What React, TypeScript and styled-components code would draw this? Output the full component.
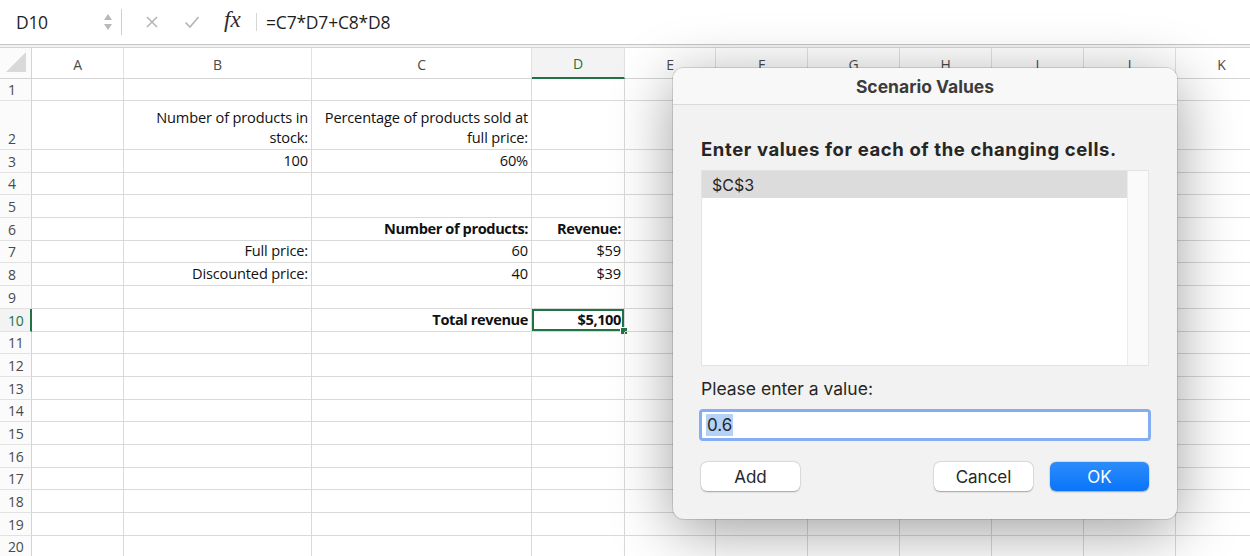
import styled, { createGlobalStyle } from 'styled-components'

const GlobalStyle = createGlobalStyle`
  html, body {
    margin: 0;
    padding: 0;
    background: #ffffff;
  }
  body {
    width: 1250px;
    height: 556px;
    overflow: hidden;
    font-family: "Open Sans", "Liberation Sans", sans-serif;
  }
`

const GREEN = '#217346'

const COLUMNS = [
  { label: 'A', width: 92 },
  { label: 'B', width: 188 },
  { label: 'C', width: 220 },
  { label: 'D', width: 93 },
  { label: 'E', width: 91 },
  { label: 'F', width: 92 },
  { label: 'G', width: 92 },
  { label: 'H', width: 92 },
  { label: 'I', width: 92 },
  { label: 'J', width: 92 },
  { label: 'K', width: 92 },
]

const ROW_HEIGHTS = [22, 49, ...Array(18).fill(22.7)]

type CellData = { text: string; bold?: boolean }

const CELLS: Record<string, CellData> = {
  B2: { text: 'Number of products in\nstock:' },
  C2: { text: 'Percentage of products sold at\nfull price:' },
  B3: { text: '100' },
  C3: { text: '60%' },
  C6: { text: 'Number of products:', bold: true },
  D6: { text: 'Revenue:', bold: true },
  B7: { text: 'Full price:' },
  C7: { text: '60' },
  D7: { text: '$59' },
  B8: { text: 'Discounted price:' },
  C8: { text: '40' },
  D8: { text: '$39' },
  C10: { text: 'Total revenue', bold: true },
  D10: { text: '$5,100', bold: true },
}

const ACTIVE = { col: 'D', row: 10 }

export default function App() {
  return (
    <>
      <GlobalStyle />
      <Page>
        <FormulaBar>
          <NameBox>D10</NameBox>
          <Spinner>
            <svg width="10" height="20" viewBox="0 0 10 20">
              <path d="M1 8 L5 2 L9 8 Z" fill="#b9b9b9" />
              <path d="M1 12 L5 18 L9 12 Z" fill="#b9b9b9" />
            </svg>
          </Spinner>
          <BarDivider />
          <BarIcon>
            <svg width="14" height="14" viewBox="0 0 14 14">
              <path d="M2 2 L12 12 M12 2 L2 12" stroke="#b5b5b5" strokeWidth="1.6" fill="none" />
            </svg>
          </BarIcon>
          <BarIcon>
            <svg width="16" height="14" viewBox="0 0 16 14">
              <path d="M1.5 7.5 L6 12 L14.5 2" stroke="#b5b5b5" strokeWidth="1.6" fill="none" />
            </svg>
          </BarIcon>
          <Fx>fx</Fx>
          <ThinDivider />
          <Formula>=C7*D7+C8*D8</Formula>
        </FormulaBar>
        <BarRule />

        <Sheet $columns={COLUMNS.map((c) => `${c.width}px`).join(' ')} $rows={ROW_HEIGHTS.map((h) => `${h}px`).join(' ')}>
          <Corner>
            <svg width="24" height="24" viewBox="0 0 24 24">
              <path d="M22 2 L22 22 L2 22 Z" fill="#d9d9d9" />
            </svg>
          </Corner>
          {COLUMNS.map((c) => (
            <ColHeader key={c.label} $active={c.label === ACTIVE.col}>
              {c.label}
            </ColHeader>
          ))}
          {ROW_HEIGHTS.map((_, i) => {
            const row = i + 1
            return [
              <RowHeader key={`h${row}`} $active={row === ACTIVE.row}>
                {row}
              </RowHeader>,
              ...COLUMNS.map((c) => {
                const data = CELLS[`${c.label}${row}`]
                const selected = c.label === ACTIVE.col && row === ACTIVE.row
                return (
                  <Cell key={`${c.label}${row}`} $bold={data?.bold} $selected={selected}>
                    {data?.text}
                  </Cell>
                )
              }),
            ]
          })}
        </Sheet>

        <Dialog>
          <DialogTitle>Scenario Values</DialogTitle>
          <DialogBody>
            <Prompt>Enter values for each of the changing cells.</Prompt>
            <ListBox>
              <ListItems>
                <ListItem $selected>$C$3</ListItem>
              </ListItems>
              <ScrollTrack />
            </ListBox>
            <FieldLabel>Please enter a value:</FieldLabel>
            <ValueInput>
              <Selected>0.6</Selected>
            </ValueInput>
            <ButtonRow>
              <Button>Add</Button>
              <Spacer />
              <Button>Cancel</Button>
              <Button $primary>OK</Button>
            </ButtonRow>
          </DialogBody>
        </Dialog>
      </Page>
    </>
  )
}

const Page = styled.div`
  position: relative;
  width: 1250px;
  height: 556px;
  overflow: hidden;
  background: #ffffff;
`

const FormulaBar = styled.div`
  display: flex;
  align-items: center;
  height: 44px;
  background: #ffffff;
`

const NameBox = styled.div`
  width: 87px;
  padding-left: 16px;
  font-family: "Open Sans", sans-serif;
  font-size: 17.5px;
  letter-spacing: -0.3px;
  color: #1f1f1f;
`

const Spinner = styled.div`
  display: flex;
  align-items: center;
  width: 18px;
`

const BarDivider = styled.div`
  width: 1px;
  height: 26px;
  background: #cfcfcf;
  margin-right: 20px;
`

const BarIcon = styled.div`
  display: flex;
  align-items: center;
  justify-content: center;
  width: 20px;
  margin-right: 20px;
`

const Fx = styled.div`
  font-family: "Liberation Serif", serif;
  font-style: italic;
  font-size: 23px;
  color: #2b2b2b;
  margin-left: 2px;
  width: 22px;
  margin-right: 10px;
  padding-bottom: 4px;
`

const ThinDivider = styled.div`
  width: 1px;
  height: 18px;
  background: #d6d6d6;
  margin-right: 9px;
`

const Formula = styled.div`
  font-family: "Open Sans", sans-serif;
  font-size: 17.5px;
  letter-spacing: -0.2px;
  color: #1f1f1f;
`

const BarRule = styled.div`
  height: 2px;
  border-top: 1px solid #c4c4c4;
  border-bottom: 1px solid #d4d4d4;
  background: #f3f3f3;
`

const Sheet = styled.div<{ $columns: string; $rows: string }>`
  display: grid;
  grid-template-columns: 32px ${({ $columns }) => $columns};
  grid-template-rows: 31px ${({ $rows }) => $rows};
  font-family: "Open Sans", sans-serif;
  font-size: 14.6px;
  letter-spacing: -0.15px;
  color: #111111;
`

const Corner = styled.div`
  display: flex;
  align-items: flex-end;
  padding: 0 0 4px 4px;
  border-right: 1px solid #d4d4d4;
  border-bottom: 1px solid #d4d4d4;
  background: #fbfbfb;
`

const ColHeader = styled.div<{ $active?: boolean }>`
  display: flex;
  align-items: center;
  justify-content: center;
  padding-top: 2px;
  font-size: 14px;
  color: ${({ $active }) => ($active ? GREEN : '#4a4a4a')};
  background: ${({ $active }) => ($active ? '#f3f3f3' : '#ffffff')};
  border-right: 1px solid #e2e2e2;
  border-bottom: ${({ $active }) => ($active ? `2px solid ${GREEN}` : '1px solid #d4d4d4')};
`

const RowHeader = styled.div<{ $active?: boolean }>`
  display: flex;
  align-items: flex-end;
  padding: 0 0 0 8px;
  font-size: 14px;
  line-height: 20px;
  color: ${({ $active }) => ($active ? GREEN : '#4a4a4a')};
  background: ${({ $active }) => ($active ? '#f3f3f3' : '#fbfbfb')};
  border-bottom: 1px solid #e2e2e2;
  border-right: ${({ $active }) => ($active ? `2px solid ${GREEN}` : '1px solid #d4d4d4')};
`

const Cell = styled.div<{ $bold?: boolean; $selected?: boolean }>`
  position: relative;
  display: flex;
  align-items: flex-end;
  justify-content: flex-end;
  padding: 0 3px 2px 3px;
  white-space: pre-line;
  text-align: right;
  line-height: 20px;
  font-weight: ${({ $bold }) => ($bold ? 700 : 400)};
  letter-spacing: ${({ $bold }) => ($bold ? '-0.4px' : '-0.15px')};
  border-right: 1px solid #d9d9d9;
  border-bottom: 1px solid #d9d9d9;
  box-shadow: ${({ $selected }) => ($selected ? `inset 0 0 0 2px ${GREEN}` : 'none')};

  &::after {
    content: '';
    display: ${({ $selected }) => ($selected ? 'block' : 'none')};
    position: absolute;
    right: -4px;
    bottom: -4px;
    width: 6px;
    height: 6px;
    background: ${GREEN};
    border: 1px solid #ffffff;
  }
`

const Dialog = styled.div`
  position: absolute;
  left: 673px;
  top: 68px;
  width: 504px;
  height: 451px;
  display: flex;
  flex-direction: column;
  border-radius: 11px;
  overflow: hidden;
  background: #f2f2f2;
  box-shadow: 0 0 0 1px rgba(0, 0, 0, 0.12), 0 12px 60px rgba(0, 0, 0, 0.38);
  font-family: Inter, "Liberation Sans", sans-serif;
  color: #262626;
`

const DialogTitle = styled.div`
  height: 39px;
  display: flex;
  align-items: center;
  justify-content: center;
  padding-top: 1px;
  font-size: 17.5px;
  font-weight: 700;
  color: #3c3c3c;
  background: #f8f8f8;
  border-bottom: 1px solid #dadada;
`

const DialogBody = styled.div`
  flex: 1;
  display: flex;
  flex-direction: column;
  padding: 33px 28px 28px 28px;
`

const Prompt = styled.div`
  font-size: 18.5px;
  font-weight: 700;
  letter-spacing: 0.6px;
  color: #262626;
  line-height: 22px;
  margin-bottom: 10px;
`

const ListBox = styled.div`
  display: flex;
  height: 194px;
  background: #ffffff;
  border: 1px solid #e3e3e3;
  border-right: none;
`

const ListItems = styled.div`
  flex: 1;
`

const ListItem = styled.div<{ $selected?: boolean }>`
  height: 27px;
  display: flex;
  align-items: center;
  padding-left: 10px;
  font-size: 16px;
  background: ${({ $selected }) => ($selected ? '#dcdcdc' : 'transparent')};
`

const ScrollTrack = styled.div`
  width: 20px;
  background: #fafafa;
  border-left: 1px solid #ececec;
  border-right: 1px solid #e6e6e6;
`

const FieldLabel = styled.div`
  margin-top: 12px;
  font-size: 17.5px;
  line-height: 22px;
  color: #262626;
`

const ValueInput = styled.div`
  margin: 9px -2px 0 -2px;
  height: 26px;
  display: flex;
  align-items: center;
  padding-left: 4px;
  background: #ffffff;
  border: 3px solid #84adf3;
  border-radius: 4px;
  font-size: 17px;
`

const Selected = styled.span`
  background: #b4d2f7;
  padding: 1px 1px;
`

const ButtonRow = styled.div`
  display: flex;
  gap: 17px;
  margin-top: 21px;
`

const Spacer = styled.div`
  flex: 1;
`

const Button = styled.div<{ $primary?: boolean }>`
  width: 99px;
  height: 29px;
  display: flex;
  align-items: center;
  justify-content: center;
  border-radius: 6px;
  font-size: 17px;
  color: ${({ $primary }) => ($primary ? '#ffffff' : '#262626')};
  background: ${({ $primary }) => ($primary ? 'linear-gradient(#2c8cfc, #0a75f8)' : '#ffffff')};
  box-shadow: 0 0.5px 1.5px rgba(0, 0, 0, 0.3), 0 0 0 0.5px rgba(0, 0, 0, 0.08);
`
